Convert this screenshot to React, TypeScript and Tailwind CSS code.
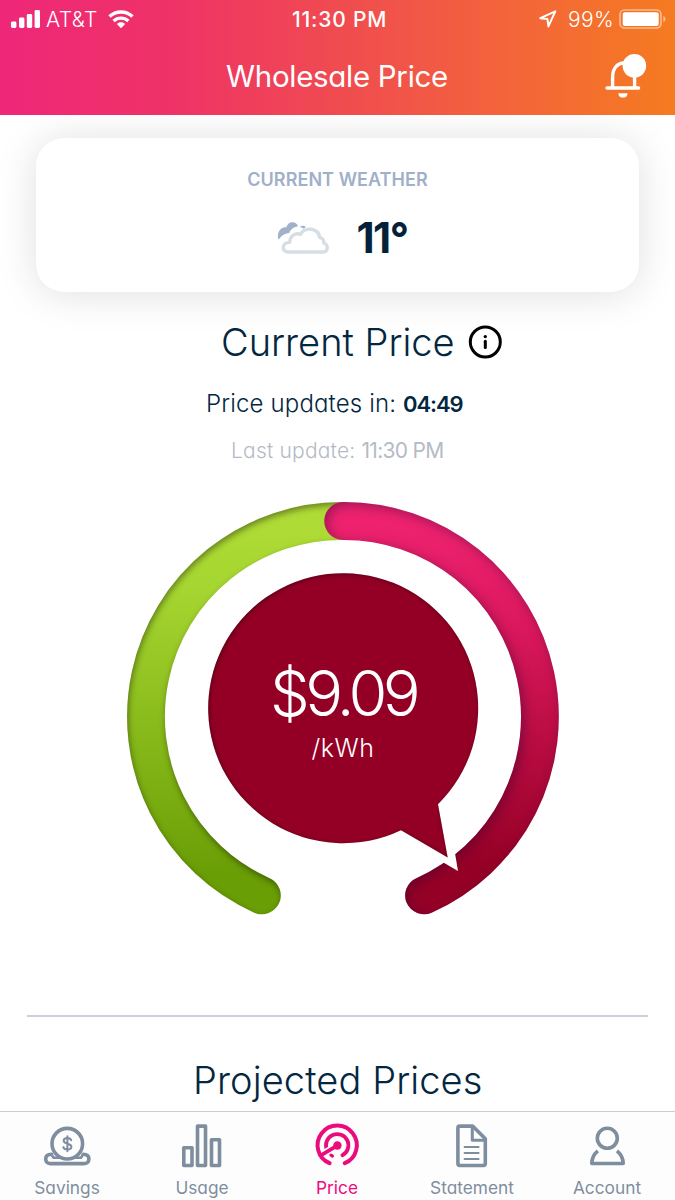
import React from "react";

const TABS = [
  { id: "savings", label: "Savings" },
  { id: "usage", label: "Usage" },
  { id: "price", label: "Price" },
  { id: "statement", label: "Statement" },
  { id: "account", label: "Account" },
];

function TabIcon({ id }: { id: string }) {
  return (
    <svg width="50" height="50" viewBox="0 0 50 50" fill="none" stroke="currentColor" strokeWidth="3.6" strokeLinecap="round" strokeLinejoin="round">
      {id === "savings" && (
        <>
          <path d="M9.4 33.2C5.4 33.4 3.7 35.6 3.7 37.9C3.7 40.8 5.8 42.6 8.8 42.6H41.8C44.8 42.6 46.9 40.8 46.9 37.9C46.9 35.6 45.2 33.4 41.2 33.2" />
          <path d="M9.6 33.6L11.6 36.7H39L41 33.6" strokeWidth="2.6" />
          <circle cx="25.3" cy="22.7" r="15.3" fill="#fdfdfd" />
          <path d="M29.2 19.3C28.7 17.7 27.3 17.1 25.4 17.1C23.2 17.1 21.7 18.1 21.7 19.8C21.7 23.8 29.4 21.6 29.4 25.7C29.4 27.5 27.8 28.5 25.4 28.5C23.2 28.5 21.7 27.8 21.3 26.1M25.4 15.3V30.3" strokeWidth="2" />
        </>
      )}
      {id === "usage" && (
        <>
          <rect x="6.8" y="26.8" width="8.2" height="17.7" />
          <rect x="20.5" y="5.1" width="8" height="39.4" />
          <rect x="34.5" y="18.8" width="8" height="25.7" />
        </>
      )}
      {id === "price" && (
        <>
          <path d="M17.6 42.2A19.6 19.6 0 1 1 32.8 42.2" strokeWidth="4" />
          <path d="M14.8 28.4A11.2 11.2 0 1 1 30.4 34.2" strokeWidth="3.8" />
          <path d="M25.2 24.6L12.5 32.4" stroke="#fdfdfd" strokeWidth="7.4" strokeLinecap="butt" />
          <path d="M25.2 24.6L10.5 33.4" strokeWidth="3.6" />
          <circle cx="25.4" cy="24.5" r="4.2" fill="currentColor" stroke="none" />
          <path d="M18.9 34.2L20.4 35" strokeWidth="3.2" />
        </>
      )}
      {id === "statement" && (
        <>
          <path d="M12.8 5.1H25.6L38.3 17.8V42.6Q38.3 44.5 36.4 44.5H12.8Q10.9 44.5 10.9 42.6V7Q10.9 5.1 12.8 5.1Z" />
          <path d="M25.3 6V19.2H38" strokeWidth="3" />
          <path d="M17.6 26H31.6M17.6 32H31.6M17.6 38H31.6" strokeWidth="2" />
        </>
      )}
      {id === "account" && (
        <>
          <circle cx="25.3" cy="17.3" r="10" />
          <path d="M15.8 29.8C11.6 33.4 9.8 38 9.8 42.5H41.2C41.2 38 39.2 33.4 35 29.8" strokeLinecap="butt" />
        </>
      )}
    </svg>
  );
}

function StatusBar() {
  return (
    <div className="flex h-[38px] items-center text-[20px] leading-none">
      <div className="flex w-[292px] items-center pl-[11px]">
        <svg width="30" height="18" viewBox="0 0 30 18" fill="white">
          <rect x="0" y="11.5" width="5.4" height="6.5" rx="1.4" />
          <rect x="8" y="7.5" width="5.4" height="10.5" rx="1.4" />
          <rect x="15.8" y="4" width="5.4" height="14" rx="1.4" />
          <rect x="23.6" y="0" width="5.4" height="18" rx="1.4" />
        </svg>
        <span className="ml-[5px] w-[62px] text-[21px] font-light tracking-[0.4px]">AT&amp;T</span>
        <svg width="26" height="19" viewBox="0 0 26 19" fill="none" stroke="white" strokeWidth="3.4">
          <path d="M1.5 6.6C8 .4 18 .4 24.5 6.6" />
          <path d="M5.6 11C9.8 7.1 16.2 7.1 20.4 11" />
          <path d="M13 18.2L8.8 13.9C11.2 11.8 14.8 11.8 17.2 13.9Z" fill="white" stroke="none" />
        </svg>
      </div>
      <span className="w-[247px] text-[21px] font-medium tracking-[0.8px]">11:30 PM</span>
      <svg width="18" height="18" viewBox="0 0 18 18" fill="none" stroke="white" strokeWidth="2" strokeLinejoin="round">
        <path d="M16.3 1.4L9.4 16.4L8.4 8.9L1.3 8.2Z" />
      </svg>
      <span className="ml-[11px] w-[51px] text-[21px] font-light tracking-[0.4px]">99%</span>
      <svg width="48" height="20" viewBox="0 0 48 20">
        <rect x="1" y="1" width="41" height="18" rx="4.5" fill="none" stroke="white" strokeOpacity="0.5" strokeWidth="1.6" />
        <rect x="3.7" y="3.3" width="36" height="13.6" rx="2" fill="white" />
        <path d="M44.3 6.8Q46.6 8 46.6 10T44.3 13.2Z" fill="white" fillOpacity="0.5" />
      </svg>
    </div>
  );
}

function PriceGauge() {
  return (
    <div className="relative mx-auto h-[440px] w-[675px]">
      <svg width="675" height="440" viewBox="0 490 675 440">
        <defs>
          <linearGradient id="low" gradientUnits="userSpaceOnUse" x1="0" y1="502" x2="0" y2="915">
            <stop offset="0.05" stopColor="#afdb36" />
            <stop offset="0.2" stopColor="#a6d631" />
            <stop offset="0.9" stopColor="#6a9e05" />
          </linearGradient>
          <linearGradient id="high" gradientUnits="userSpaceOnUse" x1="0" y1="502" x2="0" y2="915">
            <stop offset="0.05" stopColor="#ee226f" />
            <stop offset="0.3" stopColor="#db185d" />
            <stop offset="0.88" stopColor="#950026" />
          </linearGradient>
          <filter id="inset" filterUnits="userSpaceOnUse" x="100" y="480" width="480" height="460" colorInterpolationFilters="sRGB">
            <feOffset in="SourceAlpha" dx="1" dy="3" />
            <feGaussianBlur stdDeviation="3" result="moved" />
            <feComposite in="SourceAlpha" in2="moved" operator="out" result="edge" />
            <feFlood floodColor="black" floodOpacity="0.4" />
            <feComposite in2="edge" operator="in" result="shade" />
            <feMerge>
              <feMergeNode in="SourceGraphic" />
              <feMergeNode in="shade" />
            </feMerge>
          </filter>
          <filter id="insetSoft" filterUnits="userSpaceOnUse" x="100" y="480" width="480" height="460" colorInterpolationFilters="sRGB">
            <feOffset in="SourceAlpha" dx="1" dy="0.5" />
            <feGaussianBlur stdDeviation="2.4" result="moved" />
            <feComposite in="SourceAlpha" in2="moved" operator="out" result="edge" />
            <feFlood floodColor="black" floodOpacity="0.4" />
            <feComposite in2="edge" operator="in" result="shade" />
            <feMerge>
              <feMergeNode in="SourceGraphic" />
              <feMergeNode in="shade" />
            </feMerge>
          </filter>
          <filter id="insetDeep" filterUnits="userSpaceOnUse" x="100" y="480" width="480" height="460" colorInterpolationFilters="sRGB">
            <feOffset in="SourceAlpha" dx="3" dy="3" />
            <feGaussianBlur stdDeviation="6" result="moved" />
            <feComposite in="SourceAlpha" in2="moved" operator="out" result="edge" />
            <feFlood floodColor="#300030" floodOpacity="0.42" />
            <feComposite in2="edge" operator="in" result="shade" />
            <feMerge>
              <feMergeNode in="SourceGraphic" />
              <feMergeNode in="shade" />
            </feMerge>
          </filter>
        </defs>
        <g fill="none" strokeWidth="37.8" strokeLinecap="round">
          <path d="M261.9 895.4A195.7 195.7 0 0 1 343.2 521" stroke="url(#low)" filter="url(#inset)" />
          <path d="M343.2 521A195.7 195.7 0 0 1 424 895.4" stroke="url(#high)" filter="url(#insetDeep)" />
        </g>
        <path d="M446 800L458 871L396 835Z" fill="white" />
        <path
          d="M438 804.3L447.7 857.5L401 830.2A135 135 0 1 1 438 804.3Z"
          fill="#940025"
          filter="url(#insetSoft)"
        />
      </svg>
      <div className="absolute left-[208px] top-[83px] flex h-[270px] w-[270px] flex-col items-center text-white">
        <span className="mt-[82px] text-[63px] font-light leading-[76px] tracking-[-4.6px]">$9.09</span>
        <span className="mt-[3px] text-[25px] font-light leading-[28px] tracking-[0.5px]">/kWh</span>
      </div>
    </div>
  );
}

export default function App() {
  return (
    <div className="flex h-[1200px] w-[675px] flex-col overflow-hidden bg-white font-[Inter,sans-serif] text-[#032740] [font-feature-settings:'cv11']">
      <header className="z-10 h-[115px] shrink-0 bg-[linear-gradient(90deg,#ee2779,#ef3267_25%,#f04b50_50%,#f3643b_75%,#f57b20)] text-white">
        <StatusBar />
        <div className="flex h-[77px] items-center justify-between pl-[226px] pr-[25px]">
          <h1 className="mb-[2px] text-[29.5px] font-normal leading-[36px] tracking-[-0.3px]">Wholesale Price</h1>
          <svg width="50" height="50" viewBox="0 0 50 50" fill="none" stroke="white" strokeWidth="3.4" strokeLinecap="round">
            <path d="M12.6 36V25C12.6 17 17 11 24 11M34.6 24V36M7 36H38.6" />
            <path d="M18.3 41.2H27.6C27.4 44.4 25.5 45.6 23 45.6S18.5 44.4 18.3 41.2Z" fill="white" stroke="none" />
            <circle cx="34.4" cy="13.8" r="11.8" fill="white" stroke="none" />
          </svg>
        </div>
      </header>

      <main className="flex h-[996px] shrink-0 flex-col overflow-hidden">
        <section className="mx-9 mt-[23px] flex h-[154px] shrink-0 flex-col items-center rounded-[28px] bg-white shadow-[0_2px_40px_rgba(0,0,0,0.13)]">
          <h2 className="mt-[30px] text-[18px] font-semibold leading-[24px] tracking-[0.05px] text-[#a0b0c9]">CURRENT WEATHER</h2>
          <div className="mt-[14px] flex h-[60px] items-center gap-[16px] pr-[2px] pt-[3px]">
            <svg width="75" height="55" viewBox="0 0 225 165">
              <path d="M40 88C35 68 46 50 64 52C68 33 94 31 99 49C84 52 76 60 73 69C58 71 48 77 42 88Z" fill="#a0b1c9" />
              <path d="M104 50Q116 45 122 50L117 56Q110 52 104 50Z" fill="#a0b1c9" />
              <path d="M70 126C48 126 50 97 74 97C75 78 91 67 106 73C121 48 161 54 164 83C173 84 178 91 176 99C192 105 190 126 172 126Z" fill="white" stroke="#d6dee5" strokeWidth="10" strokeLinejoin="round" />
            </svg>
            <span className="text-[42px] font-bold leading-none tracking-[-1.5px] text-[#03223a]">11°</span>
          </div>
        </section>

        <div className="mt-[26px] flex h-[48px] shrink-0 items-center pl-[221px]">
          <h2 className="w-[247px] whitespace-nowrap text-[38px] font-light leading-[48px]">Current Price</h2>
          <svg width="34" height="34" viewBox="0 0 34 34" fill="none" stroke="black" strokeWidth="3" strokeLinecap="round">
            <circle cx="17.3" cy="17" r="15" />
            <path d="M17.3 16.2V22.4" />
            <circle cx="17.3" cy="11.6" r="1.7" fill="black" stroke="none" />
          </svg>
        </div>
        <p className="mt-[22px] h-[32px] shrink-0 whitespace-nowrap pl-[206px] text-[24px] font-light leading-[32px] tracking-[0.15px]">
          Price updates in: <strong className="text-[22px] font-semibold tracking-[-1.1px]">04:49</strong>
        </p>
        <p className="mt-[17px] h-[28px] shrink-0 whitespace-nowrap pl-[231px] text-[21px] font-light leading-[28px] tracking-[0.2px] text-[#b4bbc5]">
          Last update: <span className="font-normal tracking-[-0.7px]">11:30 PM</span>
        </p>

        <div className="mt-[25px] shrink-0">
          <PriceGauge />
        </div>

        <hr className="mx-[27px] mt-[85px] shrink-0 border-t-2 border-[#cbcfda]" />
        <h2 className="mt-[39px] shrink-0 whitespace-nowrap pl-[193px] text-[38px] font-light leading-[48px] tracking-[0.1px]">Projected Prices</h2>
      </main>

      <nav className="grid h-[89px] shrink-0 grid-cols-5 border-t border-[#c9ced3] bg-[#fdfdfd]">
        {TABS.map((tab) => (
          <div
            key={tab.id}
            className={`flex flex-col items-center pr-px pt-[9px] ${tab.id === "price" ? "text-[#ec0b7c]" : "text-[#7f8e9e]"}`}
          >
            <TabIcon id={tab.id} />
            <span className="mt-[6px] text-[17.3px] leading-[22px]">{tab.label}</span>
          </div>
        ))}
      </nav>
    </div>
  );
}
